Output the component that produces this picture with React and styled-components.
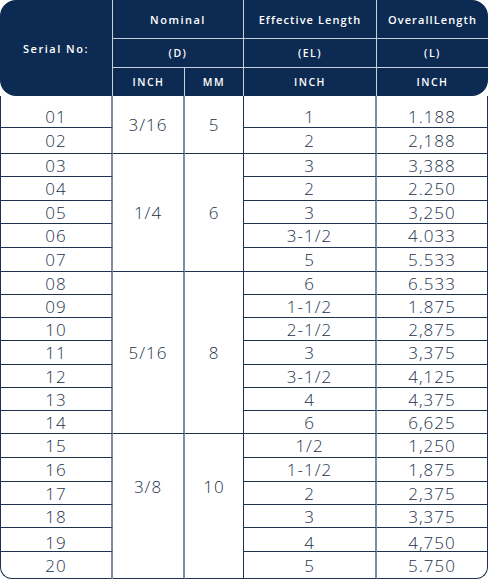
import React from "react";
import styled, { createGlobalStyle } from "styled-components";

const Global = createGlobalStyle`
  html, body { margin: 0; padding: 0; background: #ffffff; }
  body { font-family: "Open Sans", "Noto Sans", sans-serif; }
`;

const NAVY = "#0d2b52";
const DARK_LINE = "#1f324e";
const GREY_LINE = "#7d8ca1";
const HEAD_LINE = "#c7d0db";

const Grid = styled.div`
  display: grid;
  width: 488px;
  grid-template-columns: 113px 72px 59px 133px 111px;
  grid-template-rows: 39px 29px 28px ${(p) => p.$rows};
`;

const HeadCell = styled.div`
  box-sizing: border-box;
  background: ${NAVY};
  color: #ffffff;
  font-family: "Open Sans", sans-serif;
  font-weight: 600;
  font-size: ${(p) => (p.$small ? "10.5px" : "11px")};
  letter-spacing: ${(p) => (p.$tight ? "1.1px" : "1.5px")};
  display: flex;
  align-items: center;
  justify-content: center;
  white-space: nowrap;
  grid-column: span ${(p) => p.$cols || 1};
  grid-row: span ${(p) => p.$rowsSpan || 1};
  border-right: ${(p) => (p.$last ? "none" : `1px solid ${HEAD_LINE}`)};
  border-bottom: ${(p) => (p.$lineBelow ? `1px solid ${HEAD_LINE}` : "none")};
  border-top-left-radius: ${(p) => p.$tl || 0}px;
  border-bottom-left-radius: ${(p) => p.$bl || 0}px;
  border-top-right-radius: ${(p) => p.$tr || 0}px;
  border-bottom-right-radius: ${(p) => p.$br || 0}px;
`;

const Cell = styled.div`
  box-sizing: border-box;
  color: #22314a;
  font-family: "Open Sans", sans-serif;
  font-weight: 300;
  font-size: 17px;
  letter-spacing: 1px;
  display: flex;
  align-items: center;
  justify-content: center;
  padding-top: ${(p) => p.$padTop || 0}px;
  padding-bottom: ${(p) => p.$padBottom || 0}px;
  grid-row: span ${(p) => p.$span || 1};
  border-bottom: 1px solid ${DARK_LINE};
  border-left: ${(p) => (p.$first ? `1px solid ${DARK_LINE}` : "none")};
  border-right: ${(p) => p.$right};
  border-bottom-left-radius: ${(p) => p.$bl || 0}px;
  border-bottom-right-radius: ${(p) => p.$br || 0}px;
`;

const groups = [
  {
    inch: "3/16",
    mm: "5",
    rows: [
      ["01", "1", "1.188"],
      ["02", "2", "2,188"],
    ],
  },
  {
    inch: "1/4",
    mm: "6",
    rows: [
      ["03", "3", "3,388"],
      ["04", "2", "2.250"],
      ["05", "3", "3,250"],
      ["06", "3-1/2", "4.033"],
      ["07", "5", "5.533"],
    ],
  },
  {
    inch: "5/16",
    mm: "8",
    rows: [
      ["08", "6", "6.533"],
      ["09", "1-1/2", "1.875"],
      ["10", "2-1/2", "2,875"],
      ["11", "3", "3,375"],
      ["12", "3-1/2", "4,125"],
      ["13", "4", "4,375"],
      ["14", "6", "6,625"],
    ],
  },
  {
    inch: "3/8",
    mm: "10",
    padBottom: 40,
    rows: [
      ["15", "1/2", "1,250"],
      ["16", "1-1/2", "1,875"],
      ["17", "2", "2,375"],
      ["18", "3", "3,375"],
      ["19", "4", "4,750"],
      ["20", "5", "5.750"],
    ],
  },
];

const rowHeights = [32, 26, 23, 24, 23, 24, 24, 23, 23, 23, 24, 23, 23, 23, 24, 24, 23, 23, 24, 27];

const greyRight = `2px solid ${GREY_LINE}`;
const darkRight = `1px solid ${DARK_LINE}`;

export default function App() {
  const total = groups.reduce((n, g) => n + g.rows.length, 0);
  let idx = 0;
  const body = [];
  groups.forEach((g, gi) => {
    g.rows.forEach((r, ri) => {
      const i = idx++;
      const isLast = i === total - 1;
      body.push(
        <Cell
          key={`s${i}`}
          $first
          $right={greyRight}
          $padTop={i === 0 ? 9 : i === 18 ? 6 : 0}
          $bl={isLast ? 12 : 0}
        >
          {r[0]}
        </Cell>
      );
      if (ri === 0) {
        body.push(
          <Cell key={`i${gi}`} $span={g.rows.length} $right={greyRight} $padBottom={g.padBottom}>
            {g.inch}
          </Cell>
        );
        body.push(
          <Cell key={`m${gi}`} $span={g.rows.length} $right={darkRight} $padBottom={g.padBottom}>
            {g.mm}
          </Cell>
        );
      }
      body.push(
        <Cell key={`e${i}`} $right={greyRight} $padTop={i === 0 ? 9 : i === 18 ? 6 : 0}>
          {r[1]}
        </Cell>
      );
      body.push(
        <Cell key={`l${i}`} $right={darkRight} $padTop={i === 0 ? 9 : i === 18 ? 6 : 0} $br={isLast ? 12 : 0}>
          {r[2]}
        </Cell>
      );
    });
  });

  return (
    <>
      <Global />
      <Grid $rows={rowHeights.map((h) => `${h}px`).join(" ")}>
        <HeadCell $rowsSpan={3} $tl={16} $bl={16}>Serial No:</HeadCell>
        <HeadCell $cols={2} $lineBelow>Nominal</HeadCell>
        <HeadCell $lineBelow $tight>Effective Length</HeadCell>
        <HeadCell $lineBelow $last $tr={16} $tight>OverallLength</HeadCell>
        <HeadCell $cols={2} $lineBelow $small>(D)</HeadCell>
        <HeadCell $lineBelow $small>(EL)</HeadCell>
        <HeadCell $lineBelow $last $small>(L)</HeadCell>
        <HeadCell $small>INCH</HeadCell>
        <HeadCell $small>MM</HeadCell>
        <HeadCell $small>INCH</HeadCell>
        <HeadCell $small $last $br={16}>INCH</HeadCell>
        {body}
      </Grid>
    </>
  );
}
